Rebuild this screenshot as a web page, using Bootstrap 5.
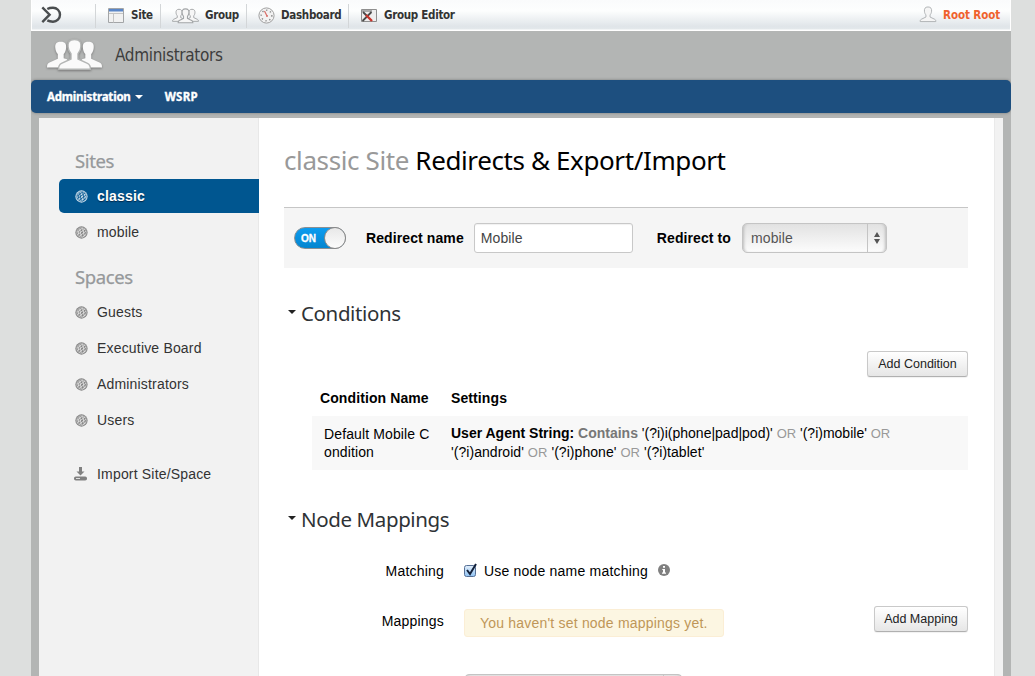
<!DOCTYPE html>
<html lang="en">
<head>
<meta charset="utf-8">
<title>Redirects &amp; Export/Import</title>
<link href="https://cdn.jsdelivr.net/npm/bootstrap@5.3.0/dist/css/bootstrap.min.css" rel="stylesheet">
<style>
html,body{height:100%;overflow:hidden}
body{background:#dddfde;font:14px/19px "Liberation Sans",Arial,sans-serif;color:#000}
.shell{width:980px;height:676px;margin-left:31px;background:#b3b5b4;overflow:hidden}
.topbar{height:31px;background:linear-gradient(#fafbfc 0,#fdfefe 35%,#e0e5e9 85%,#e3e8eb 29px,#fff 30px);border-left:1px solid #fff;border-right:1px solid #fff;font:bold 11.5px/28px "DejaVu Sans Condensed","DejaVu Sans",sans-serif;color:#333;letter-spacing:-.3px}
.topbar .cell{height:24px;margin-top:4px;border-left:1px solid #d3d6d8;line-height:22px;white-space:nowrap}
.topbar .cell svg{display:block;flex:none}
.user{color:#f0622d}
.space-head{height:49px;font:17px/48px "DejaVu Sans Condensed","DejaVu Sans",sans-serif;color:#3d3d3d}
.space-head span{letter-spacing:-.33px}
.menu{height:33px;background:#1d4f7f;border-radius:5px;color:#fff;font:bold 11.5px/34px "Noto Sans",sans-serif;box-shadow:0 0 3px rgba(0,0,0,.35);-webkit-text-stroke:.35px #fff}
.caret{width:0;height:0;border:4px solid transparent;border-top-color:#fff;border-bottom:0}
.pane{height:558px;margin:5px 8px 0;background:#f2f2f2}
.side{width:220px;padding:29px 0 0 20px;background:#f2f2f2;box-shadow:inset -1px 0 #e8e8e8}
.ubu{font-family:"Noto Sans",sans-serif;font-weight:400;margin:0}
.side h2{font-size:18.5px;line-height:28px;height:32px;padding-left:16px;color:#96999b;letter-spacing:-.4px;-webkit-text-stroke:.25px}
.item{height:34px;margin-bottom:2px;padding-left:16px;border-radius:5px 0 0 5px;color:#333;gap:9px;letter-spacing:.18px}
.item.on{background:#005690;color:#fff;font-weight:bold;text-shadow:0 1px 1px #002a4c}
.main{width:736px;background:#fff;padding:22px 26px 0 25px;border-right:1px solid #eaeaea}
.main h1{font-size:26px;line-height:40px;white-space:nowrap;letter-spacing:-.39px}
.rule{height:61px;margin-top:27px;background:#f5f5f5;border-top:1px solid #c6c6c6;padding:0 10px}
.switch-on{width:52px;height:22px;border-radius:11px;border:1px solid #8a8f93;background:linear-gradient(#0c9cf0,#0485cf);position:relative;color:#fff;font:bold 10px/21px "Liberation Sans",sans-serif;padding-left:6px;-webkit-text-stroke:.3px #fff}
.switch-on i{position:absolute;right:-1px;top:-1px;width:22px;height:22px;border-radius:50%;border:1px solid #8a8a8a;background:linear-gradient(#e8e8e8,#fcfcfc)}
.field{width:159px;height:30px;border:1px solid #c8c8c8;border-radius:3px;background:#fff;padding:0 6px;color:#444;font-size:14px;letter-spacing:.1px;box-shadow:inset 0 1px 1px rgba(0,0,0,.06)}
.picker{height:30px;border:1px solid #c4c4c4;border-radius:5px;background:linear-gradient(#e2e2e2,#fcfcfc);color:#555;letter-spacing:.1px;box-shadow:inset 3px 0 3px -2px #bbb,inset -3px 0 3px -2px #bbb}
.picker .arrows{width:19px;height:28px;border-left:1px solid #c4c4c4}
.main h3{font-size:20.5px;line-height:31px;height:32px;color:#2f3336;letter-spacing:-.38px}
.tri{width:0;height:0;border:4px solid transparent;border-top:4px solid #222;border-bottom:0;margin:-2px 5px 0 4px}
.btn-g{height:26px;border:1px solid #c9c9c9;border-bottom-color:#b0b0b0;border-radius:3px;background:linear-gradient(#fff,#e6e6e6);font-size:12.5px;line-height:24px;padding:0;color:#222;box-shadow:0 1px 1px rgba(0,0,0,.06)}
.cond{margin-left:28px;width:656px}
.cond .row-b{height:54px;background:#f8f8f8}
.or{color:#999;font-size:13px}
.note{width:260px;height:28px;margin-top:3px;background:#fcf6e2;border:1px solid #fbeed5;border-radius:3px;color:#bf9658;padding-left:15px;line-height:27px;letter-spacing:.2px}
.lab{width:160px;text-align:right;letter-spacing:.2px}
</style>
</head>
<body>
<svg width="0" height="0" class="position-absolute">
<defs>
<symbol id="globe" viewBox="0 0 14 14"><circle cx="7" cy="7" r="6.6" fill="currentColor"/><g fill="none" stroke="var(--hole)" stroke-width=".9"><circle cx="7" cy="7" r="5.1" stroke-width=".6"/><path d="M2.5 6.5 8 2.3M2.3 9.7 11 3M4.3 11.3l7.3-5.6M8 12l3.6-2.7M5 3l1.8 8.5M8.2 2.3 10 10.7M3.2 5l.8 4"/></g></symbol>
<symbol id="person" viewBox="0 0 18 18"><path d="M9 1C5.800 1 5 3 5.200 5.500c.2 2 .8 3 1.600 3.900v2.300L2 14c-1 .5-1.300 1.200-1.300 2.500h16.600c0-1.300-.3-2-1.300-2.500l-4.800-2.300V9.400c.8-.9 1.400-1.900 1.600-3.900C13 3 12.200 1 9 1z"/></symbol>
</defs>
</svg>
<div class="shell">
  <div class="topbar d-flex">
    <svg width="22" height="20" viewBox="0 0 22 20" style="margin:5px 0 0 9px" fill="none" stroke="#4b4e50" stroke-width="2.400"><path d="M1.300 2.300 8.600 9.700 1.300 17.100"/><path d="M6.300 4C8 3 10 2.700 12 2.700a7 7 0 0 1 0 14c-2 0-4-.3-5.700-1.300"/></svg>
    <div class="cell d-flex" style="width:65px;margin-left:32px"><svg width="16" height="16" viewBox="0 0 16 16" style="margin:4px 7px 0 12px"><path d="M.5.500h15v14H.5z" fill="#f1f1f1" stroke="#a3a5a7"/><path d="M1 1h14v2.500H1z" fill="#5a86c8"/><path d="M1 5.500h14M5.500 5.500v9" stroke="#c4c4c4"/></svg>Site</div>
    <div class="cell d-flex" style="width:86px"><svg width="27" height="16" viewBox="0 0 27 16" style="margin:4px 6px 0 11px" fill="#f6f6f6" stroke="#a2a5a7" stroke-width="1.200"><use href="#person" x="0" y="0" width="14" height="15"/><use href="#person" x="13" y="0" width="14" height="15"/><use href="#person" x="5" y="0" width="17" height="16"/></svg>Group</div>
    <div class="cell d-flex" style="width:102px"><svg width="17" height="17" viewBox="0 0 17 17" style="margin:3px 6px 0 11px"><circle cx="8.500" cy="8.500" r="7.600" fill="#f2f2f2" stroke="#a0a0a0"/><circle cx="8.500" cy="8.500" r="5.300" fill="none" stroke="#888" stroke-width="1.500" stroke-dasharray="1.200 2.800"/><path d="m6.500 4 2.500 5" stroke="#d9706a" stroke-width="1.300"/><circle cx="9" cy="9" r="1" fill="#d9706a"/></svg>Dashboard</div>
    <div class="cell d-flex"><svg width="17" height="14" viewBox="0 0 17 14" style="margin:5px 6px 0 12px"><path d="M.5.500h15v12H.5z" fill="#eee" stroke="#8f8f8f"/><path d="M1 1h10v2H1z" fill="#aaa"/><path d="m1.500 12 9-9M2 3l4 4" stroke="#4a4a4a" stroke-width="1.800"/><path d="m5 6 6 6" stroke="#c8352c" stroke-width="2.400"/></svg>Group Editor</div>
    <div class="user d-flex ms-auto" style="margin-right:10px;line-height:30px;letter-spacing:-.1px"><svg width="18" height="18" style="margin:6px 6px 0 0" fill="#f5f5f5" stroke="#adb0b2"><use href="#person" width="18" height="17"/></svg>Root Root</div>
  </div>
  <div class="space-head d-flex">
    <svg width="58" height="34" viewBox="0 0 58 34" style="margin:7px 11px 0 15px;filter:drop-shadow(0 1px 1px #777)" fill="#fafafa"><path id="pp" d="M14.700 3.800c-4.800 0-5.800 2.700-5.400 6.200.3 3 1.200 4.600 2.500 6v4.700L3.500 24.500C1.500 25.500 1 26.500 1 29.500h24l-4-8.200-3.300-1V16c1.300-1.400 2.100-3 2.400-6 .4-3.500-.6-6.200-5.400-6.200z"/><use href="#pp" transform="matrix(-1 0 0 1 57 0)"/><path stroke="#b3b5b4" stroke-width="1.400" d="M28.500 1.500c-5.700 0-6.900 3.300-6.400 7.500.3 3.400 1.400 5 2.900 6.700v5.300l-9.500 4.300c-2.300 1-3 2.500-3 6h32c0-3.500-.7-5-3-6L32 21v-5.300c1.500-1.700 2.600-3.300 2.900-6.700.5-4.200-.7-7.500-6.400-7.500z"/></svg>
    <span>Administrators</span>
  </div>
  <nav class="menu d-flex align-items-center"><span style="margin-left:16px;letter-spacing:-.2px">Administration</span><i class="caret" style="margin:0 22px 0 4px"></i><span style="letter-spacing:.3px">WSRP</span></nav>
  <div class="pane d-flex">
    <aside class="side flex-shrink-0">
      <h2 class="ubu">Sites</h2>
      <div class="item on d-flex align-items-center" style="--hole:#005690"><svg width="13" height="13" color="#c9dbe8"><use href="#globe"/></svg>classic</div>
      <div class="item d-flex align-items-center" style="--hole:#e4e4e4"><svg width="13" height="13" color="#858585"><use href="#globe"/></svg>mobile</div>
      <h2 class="ubu" style="margin-top:14px">Spaces</h2>
      <div class="item d-flex align-items-center" style="--hole:#e4e4e4"><svg width="13" height="13" color="#858585"><use href="#globe"/></svg>Guests</div>
      <div class="item d-flex align-items-center" style="--hole:#e4e4e4"><svg width="13" height="13" color="#858585"><use href="#globe"/></svg>Executive Board</div>
      <div class="item d-flex align-items-center" style="--hole:#e4e4e4"><svg width="13" height="13" color="#858585"><use href="#globe"/></svg>Administrators</div>
      <div class="item d-flex align-items-center" style="--hole:#e4e4e4"><svg width="13" height="13" color="#858585"><use href="#globe"/></svg>Users</div>
      <div class="item d-flex align-items-center" style="margin-top:20px;padding-left:15px"><svg width="13" height="14" viewBox="0 0 13 14" fill="#808080"><path d="M5 0h3v4.500h2.500L6.500 8.500l-4-4H5z"/><rect y="9.500" width="13" height="4" rx="1.800"/><path d="M2 11.500h4" stroke="#ddd"/></svg><span style="margin-left:1px">Import Site/Space</span></div>
    </aside>
    <main class="main flex-shrink-0">
      <h1 class="ubu"><span style="color:#999">classic Site</span> Redirects &amp; Export/Import</h1>
      <div class="rule d-flex align-items-center">
        <div class="switch-on">ON<i></i></div>
        <b style="margin:0 10px 0 20px;letter-spacing:.1px">Redirect name</b>
        <input class="field" value="Mobile">
        <b style="margin:0 11px 0 24px;letter-spacing:.1px">Redirect to</b>
        <div class="picker d-flex align-items-center justify-content-between" style="width:145px;padding-left:8px">mobile<span class="arrows d-flex align-items-center justify-content-center"><svg width="8" height="12" fill="#555"><path d="M4 0 7 5H1zM4 12 1 7h6z"/></svg></span></div>
      </div>
      <h3 class="ubu d-flex align-items-center" style="margin-top:29px"><i class="tri"></i>Conditions</h3>
      <div class="d-flex justify-content-end" style="margin-top:22px"><button class="btn btn-g" style="width:101px">Add Condition</button></div>
      <div class="cond">
        <div class="d-flex fw-bold" style="height:39px;padding:12px 0 0 8px;letter-spacing:.1px"><span style="width:131px">Condition Name</span><span>Settings</span></div>
        <div class="row-b d-flex">
          <div style="width:139px;padding:9px 0 0 12px;line-height:18px;letter-spacing:.12px">Default Mobile C<br>ondition</div>
          <div style="padding-top:8px;white-space:nowrap"><b>User Agent String: <span style="color:#777">Contains</span></b> '(?i)i(phone|pad|pod)' <span class="or">OR</span> '(?i)mobile' <span class="or">OR</span><br><span style="letter-spacing:.05px">'(?i)android' <span class="or">OR</span> '(?i)phone' <span class="or">OR</span> '(?i)tablet'</span></div>
        </div>
      </div>
      <h3 class="ubu d-flex align-items-center" style="margin-top:33px"><i class="tri"></i>Node Mappings</h3>
      <div class="d-flex align-items-center" style="height:20px;margin-top:26px"><span class="lab">Matching</span><svg width="14" height="15" viewBox="0 0 14 15" style="margin:0 6px 2px 20px"><defs><linearGradient id="ck" x2="0" y2="1"><stop stop-color="#e3effb"/><stop offset="1" stop-color="#8fc2f2"/></linearGradient></defs><rect x=".5" y="2.500" width="11" height="11" rx="2" fill="url(#ck)" stroke="#566f95"/><path d="m3 7 3 4 6-10" fill="none" stroke="#12203a" stroke-width="2"/></svg><span style="letter-spacing:.2px">Use node name matching</span><svg width="12" height="12" viewBox="0 0 12 12" style="margin:0 0 2px 10px"><circle cx="6" cy="6" r="6" fill="#808080"/><path d="M5 2h2v1.700H5zM4.300 5H7v3.500h1V9.700H4V8.500h1V6h-.7z" fill="#fff"/></svg></div>
      <div class="d-flex align-items-start" style="margin-top:25px;height:68px"><span class="lab" style="margin:6px 20px 0 0">Mappings</span><div class="note">You haven't set node mappings yet.</div><button class="btn btn-g ms-auto" style="width:94px">Add Mapping</button></div>
      <div class="picker d-flex justify-content-end" style="width:219px;margin-left:180px"><span class="arrows"></span></div>
    </main>
  </div>
</div>
<script src="https://cdn.jsdelivr.net/npm/bootstrap@5.3.0/dist/js/bootstrap.bundle.min.js"></script>
</body>
</html>
